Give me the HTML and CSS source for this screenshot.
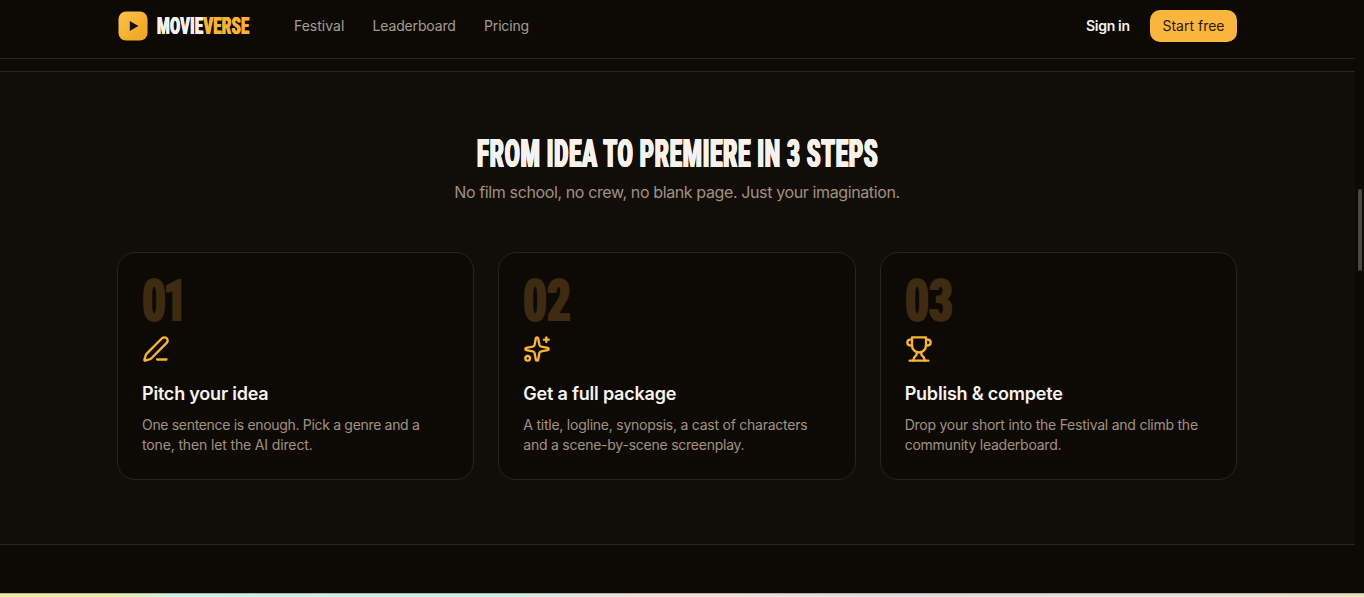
FILE: index.html
```html
<!DOCTYPE html>
<html lang="en">

<head>
    <meta charset="utf-8">
    <title>MovieVerse</title>
    <link rel="stylesheet" href="styles.css">
</head>

<body>
    <div class="page">
        <header class="header">
            <div class="container nav">
                <a class="logo">
                    <svg class="logo-mark" viewBox="0 0 30 30">
                        <defs>
                            <linearGradient id="gold" x1="0" y1="0" x2="1" y2="1">
                                <stop offset="0" stop-color="#ffc24a" />
                                <stop offset="1" stop-color="#eda21c" />
                            </linearGradient>
                        </defs>
                        <rect x=".5" y=".5" width="29" height="29" rx="7.5" fill="url(#gold)" />
                        <path d="M11.800 9.900v10.200l8.600-5.100z" fill="#120d08" />
                    </svg>
                    <span class="logo-text"><span class="squeeze">MOVIE<b>VERSE</b></span></span>
                </a>
                <nav class="links">
                    <a class="link-festival">Festival</a>
                    <a class="link-board">Leaderboard</a>
                    <a class="link-pricing">Pricing</a>
                </nav>
                <div class="actions">
                    <a class="signin">Sign in</a>
                    <a class="btn">Start free</a>
                </div>
            </div>
        </header>

        <section class="steps">
            <div class="container">
                <h2 class="title"><span class="squeeze">FROM IDEA TO PREMIERE IN 3 STEPS</span></h2>
                <p class="subtitle">No film school, no crew, no blank page. Just your imagination.</p>
                <div class="cards">
                    <div class="card card-pitch">
                        <div class="num"><span class="squeeze">01</span></div>
                        <svg class="icon" viewBox="0 0 24 24">
                            <path d="M13 21h8" />
                            <path d="M21.174 6.812a1 1 0 0 0-3.986-3.987L3.842 16.174a2 2 0 0 0-.5.83l-1.321 4.352a.5.5 0 0 0 .623.622l4.353-1.32a2 2 0 0 0 .83-.497z" />
                        </svg>
                        <h3>Pitch your idea</h3>
                        <p>One sentence is enough. Pick a genre and a<br><span class="loose">tone, then let the AI direct.</span></p>
                    </div>
                    <div class="card">
                        <div class="num"><span class="squeeze">02</span></div>
                        <svg class="icon" viewBox="0 0 24 24">
                            <path d="M11.017 2.814a1 1 0 0 1 1.966 0l1.051 5.558a2 2 0 0 0 1.594 1.594l5.558 1.051a1 1 0 0 1 0 1.966l-5.558 1.051a2 2 0 0 0-1.594 1.594l-1.051 5.558a1 1 0 0 1-1.966 0l-1.051-5.558a2 2 0 0 0-1.594-1.594l-5.558-1.051a1 1 0 0 1 0-1.966l5.558-1.051a2 2 0 0 0 1.594-1.594z" />
                            <path d="M20 2v4" />
                            <path d="M22 4h-4" />
                            <circle cx="4" cy="20" r="2" />
                        </svg>
                        <h3>Get a full package</h3>
                        <p>A title, logline, synopsis, a cast of characters<br>and a scene-by-scene screenplay.</p>
                    </div>
                    <div class="card">
                        <div class="num"><span class="squeeze">03</span></div>
                        <svg class="icon" viewBox="0 0 24 24">
                            <path d="M6 9H4.500a2.500 2.500 0 0 1 0-5H6" />
                            <path d="M18 9h1.500a2.500 2.500 0 0 0 0-5H18" />
                            <path d="M4 22h16" />
                            <path d="M10 14.660v1.626a2 2 0 0 1-.976 1.696A5 5 0 0 0 7 21.978" />
                            <path d="M14 14.660v1.626a2 2 0 0 0 .976 1.696A5 5 0 0 1 17 21.978" />
                            <path d="M18 2H6v7a6 6 0 0 0 12 0z" />
                        </svg>
                        <h3>Publish &amp; compete</h3>
                        <p>Drop your short into the Festival and climb the<br>community leaderboard.</p>
                    </div>
                </div>
            </div>
        </section>

        <div class="next"></div>
        <div class="strip"></div>
    </div>
    <div class="scrollbar"></div>
</body>

</html>
```

FILE: styles.css
```css
* {
    box-sizing: border-box;
    margin: 0;
    padding: 0;
}

body {
    width: 1364px;
    height: 597px;
    overflow: hidden;
    background: #0d0a06;
    color: #f7f3ec;
    font-family: Inter, "Liberation Sans", sans-serif;
    font-size: 14px;
}

.page {
    height: 597px;
    display: flex;
    flex-direction: column;
}

.container {
    width: 1120px;
    margin-left: 117px;
}

.header {
    width: 1355px;
    height: 59px;
    border-bottom: 1px solid #2a2520;
}

.nav {
    height: 52px;
    display: flex;
    align-items: center;
}

.logo {
    display: flex;
    align-items: center;
    width: 177px;
    padding-left: 1px;
    gap: 9px;
}

.logo-mark {
    width: 30px;
    height: 30px;
}

/* tall poster lettering, narrowed horizontally */
.squeeze {
    display: inline-block;
    white-space: nowrap;
    transform-origin: 0 50%;
}

.logo-text {
    font: 900 25px/30px Roboto, sans-serif;
    width: 94px;
}

.logo-text .squeeze {
    letter-spacing: .6px;
    transform: scale(.58, .98);
    text-shadow: .6px 0, -.6px 0;
}

.logo-text b {
    color: #fab432;
    font-weight: 900;
}

.links {
    display: flex;
    gap: 28px;
    color: #a69c8d;
    line-height: 18px;
    margin-top: -1px;
}

.link-festival {
    width: 50.500px;
}

.link-board {
    width: 83.500px;
    letter-spacing: -.15px;
}

.link-pricing {
    letter-spacing: -.15px;
}

.actions {
    margin-left: auto;
    display: flex;
    align-items: center;
    gap: 20px;
}

.signin {
    font-weight: 600;
    letter-spacing: -.3px;
    line-height: 18px;
    white-space: nowrap;
    width: 44px;
    margin-top: -1px;
}

.btn {
    width: 87px;
    height: 32px;
    border-radius: 10px;
    background: #fab53c;
    color: #2c1a06;
    line-height: 32px;
    text-align: center;
}

.steps {
    width: 1355px;
    height: 474px;
    margin-top: 12px;
    padding-top: 64px;
    border-top: 1px solid #2a2520;
    border-bottom: 1px solid #2a2520;
    background: #110d09;
}

.title {
    width: 402px;
    height: 40px;
    margin: -2px 0 0 360px;
    font: 900 38px/40px Roboto, sans-serif;
}

.title .squeeze {
    letter-spacing: 1.4px;
    transform: translateY(-.5px) scaleX(.574);
    text-shadow: 1px 0, -1px 0, .5px 0, -.5px 0;
}

.subtitle {
    margin-top: 6px;
    text-align: center;
    font-size: 16px;
    letter-spacing: -.38px;
    line-height: 24px;
    color: #a1917f;
    white-space: nowrap;
}

.cards {
    display: grid;
    grid-template-columns: repeat(3, 1fr);
    gap: 24px;
    margin-top: 48px;
}

.card {
    height: 228px;
    padding: 24px;
    border: 1px solid #28231e;
    border-radius: 18px;
    background: #0d0a06;
    white-space: nowrap;
}

.num {
    height: 48px;
    color: #3f2b10;
    font: 900 59px/48px Roboto, sans-serif;
}

.num .squeeze {
    letter-spacing: 2px;
    transform: translate(.8px, -.3px) scaleX(.66);
    text-shadow: 2px 0, -2px 0, 1px 0, -1px 0;
}

.card-pitch .squeeze {
    letter-spacing: -2px;
}

.icon {
    display: block;
    width: 28px;
    height: 28px;
    margin-top: 10px;
    fill: none;
    stroke: #fab432;
    stroke-width: 2;
    stroke-linecap: round;
    stroke-linejoin: round;
}

.card h3 {
    margin-top: 17px;
    font-size: 18px;
    font-weight: 600;
    letter-spacing: -.21px;
    line-height: 28px;
}

.card p {
    margin-top: 7px;
    letter-spacing: -.24px;
    line-height: 20px;
    color: #a1917f;
}

.card-pitch p {
    letter-spacing: -.32px;
}

.card-pitch .loose {
    letter-spacing: -.14px;
}

.next {
    height: 48px;
}

.strip {
    height: 4px;
    border-top: 1px solid #b5b1a5;
    background: linear-gradient(90deg, #eced98 0, #e8ee9e 110px, #c5f5ed 180px, #c9f0ea 500px, #efdeda 640px, #efdedb 740px, #dfdce0 860px, #e2dfda 1200px, #eadfb8 1364px);
}

.scrollbar {
    position: absolute;
    left: 1358px;
    top: 189px;
    width: 4px;
    height: 82px;
    border-radius: 2px;
    background: #4b4641;
}
```
